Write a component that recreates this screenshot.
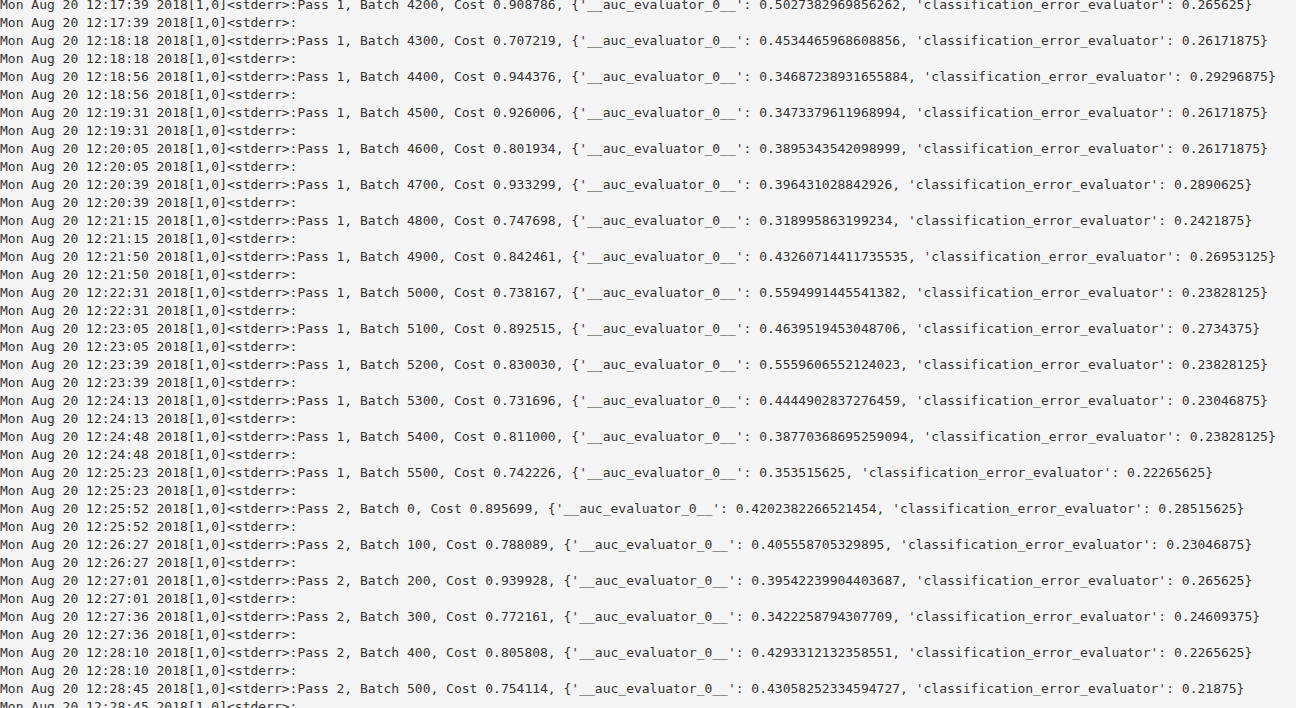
const P = "2018[1,0]<stderr>:";
const entries: [string, string, string, string, string, string][] = [
  ["12:17:39", "1", "4200", "0.908786", "0.5027382969856262", "0.265625"],
  ["12:18:18", "1", "4300", "0.707219", "0.4534465968608856", "0.26171875"],
  ["12:18:56", "1", "4400", "0.944376", "0.34687238931655884", "0.29296875"],
  ["12:19:31", "1", "4500", "0.926006", "0.3473379611968994", "0.26171875"],
  ["12:20:05", "1", "4600", "0.801934", "0.3895343542098999", "0.26171875"],
  ["12:20:39", "1", "4700", "0.933299", "0.396431028842926", "0.2890625"],
  ["12:21:15", "1", "4800", "0.747698", "0.318995863199234", "0.2421875"],
  ["12:21:50", "1", "4900", "0.842461", "0.43260714411735535", "0.26953125"],
  ["12:22:31", "1", "5000", "0.738167", "0.5594991445541382", "0.23828125"],
  ["12:23:05", "1", "5100", "0.892515", "0.4639519453048706", "0.2734375"],
  ["12:23:39", "1", "5200", "0.830030", "0.5559606552124023", "0.23828125"],
  ["12:24:13", "1", "5300", "0.731696", "0.4444902837276459", "0.23046875"],
  ["12:24:48", "1", "5400", "0.811000", "0.38770368695259094", "0.23828125"],
  ["12:25:23", "1", "5500", "0.742226", "0.353515625", "0.22265625"],
  ["12:25:52", "2", "0", "0.895699", "0.4202382266521454", "0.28515625"],
  ["12:26:27", "2", "100", "0.788089", "0.405558705329895", "0.23046875"],
  ["12:27:01", "2", "200", "0.939928", "0.39542239904403687", "0.265625"],
  ["12:27:36", "2", "300", "0.772161", "0.3422258794307709", "0.24609375"],
  ["12:28:10", "2", "400", "0.805808", "0.4293312132358551", "0.2265625"],
  ["12:28:45", "2", "500", "0.754114", "0.43058252334594727", "0.21875"],
];

const lines: string[] = [];
for (const [t, pass, batch, cost, auc, err] of entries) {
  lines.push(
    `Mon Aug 20 ${t} ${P}Pass ${pass}, Batch ${batch}, Cost ${cost}, {'__auc_evaluator_0__': ${auc}, 'classification_error_evaluator': ${err}}`
  );
  lines.push(`Mon Aug 20 ${t} ${P}`);
}

export default function App() {
  return (
    <div className="h-[708px] w-[1296px] overflow-hidden bg-[#f5f5f5]">
      <pre
        className="mt-[-4px] text-[13px] leading-[18px] text-[#333333] whitespace-pre"
        style={{ fontFamily: '"DejaVu Sans Mono", monospace' }}
      >
        {lines.join("\n")}
      </pre>
    </div>
  );
}
